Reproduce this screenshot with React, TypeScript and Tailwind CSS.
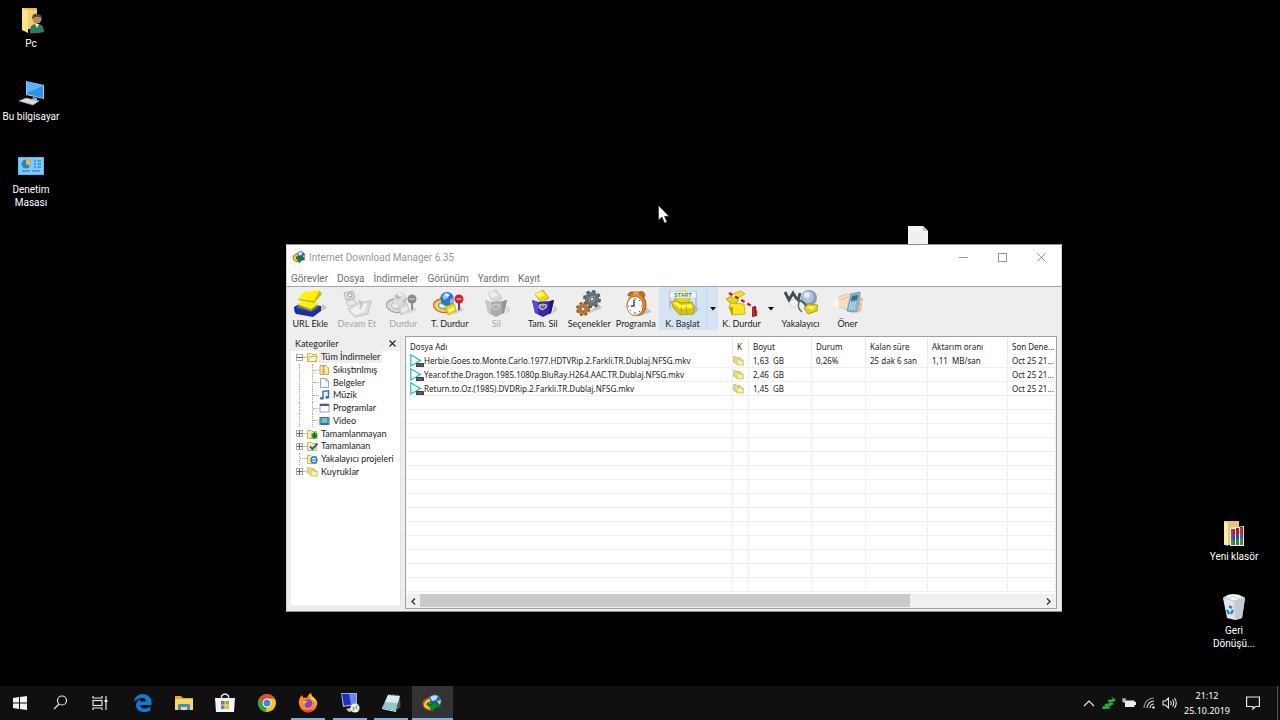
import type { ReactNode } from "react";

type IconProps = { className?: string };

/* ---------- toolbar icons, all drawn on a 34 x 28 grid ---------- */

function ToolSvg({ children, className = "" }: { children: ReactNode; className?: string }) {
  return (
    <svg viewBox="0 0 34 28" className={`h-7 w-[34px] ${className}`} aria-hidden="true">
      {children}
    </svg>
  );
}

function AddUrlIcon() {
  return (
    <ToolSvg>
      <path d="M22 24 L34 18 L30 14z" fill="#9a9a9a" opacity=".5" />
      <path d="M1 17 L8 13 L28 16 L28 21 L20 27 L3 24 Q1 22 1 17z" fill="#1c2f9e" />
      <path d="M2 18 L9 14 L27 17 L19 22z" fill="#3450cf" />
      <path d="M4 16 L12 12 L26 15 L18 21z" fill="#b3a500" />
      <path d="M4 14 L12 10 L26 13 L18 19z" fill="#ffee22" />
      <path d="M5 10 L11 3 L27 1 L29 4 L21 13z" fill="#c9b800" />
      <path d="M5 9 L11 2 L27 0 L21 11z" fill="#fff200" />
    </ToolSvg>
  );
}

function ResumeIcon() {
  return (
    <ToolSvg>
      <path d="M4 3 L13 1 L15 8 L6 10z" fill="#dedede" stroke="#b4b4b4" />
      <circle cx="10" cy="5" r="2" fill="#f8f8f8" stroke="#999" />
      <path d="M6 11 L15 10 L16 15 L8 16z" fill="#e9e9e9" stroke="#c4c4c4" />
      <path d="M8 19 L17 13 L31 11 L28 24 L15 27z" fill="#dcdcdc" stroke="#c4c4c4" />
      <path d="M10 20 L17 16 L27 13 L25 22 L15 25z" fill="#f0f0f0" />
      <path d="M19 10 L22 14 L20 19" fill="none" stroke="#c4c4c4" strokeWidth="2" />
    </ToolSvg>
  );
}

function GlobeStopIcon({ muted }: { muted?: boolean }) {
  return (
    <ToolSvg className={muted ? "opacity-60 grayscale" : ""}>
      <path d="M20 25 L31 20 L27 16z" fill="#999" opacity=".4" />
      <circle cx="14" cy="9" r="7" fill={muted ? "#cfd3d8" : "#2f74c9"} />
      <path d="M9 6 Q12 3 16 5 L15 8 L11 10z M17 10 L21 7 L20 12 L17 14z" fill={muted ? "#9a9a9a" : "#8bc4ee"} />
      <path d="M11 4 Q14 2 17 5 L14 7z" fill="#e2f3ff" />
      <path d="M8 9 Q-1 11 1 17 Q5 24 16 22" fill="none" stroke="#e8593a" strokeWidth="1.400" />
      <path d="M8 11 Q1 13 3 17 Q7 22 15 20" fill="none" stroke="#f3cf2c" strokeWidth="2" />
      <path d="M8 13 Q4 14 6 17 Q9 20 14 18" fill="none" stroke="#59bd59" strokeWidth="1.600" />
      <path d="M12 17 L21 13 L23 21 L15 25z" fill="#e8d218" stroke="#a99600" strokeWidth=".6" />
      <path d="M15 19 L21 16 L22 20 L16 23z" fill="#fff36a" />
      <path d="M26 13 L26 20" stroke="#444" strokeWidth="1.800" />
      <circle cx="26" cy="9" r="4.500" fill="#d6202c" />
      <path d="M23.500 9 H28.500" stroke="#f0a0a0" strokeWidth="1.400" />
    </ToolSvg>
  );
}

function BinIcon({ muted }: { muted?: boolean }) {
  return (
    <ToolSvg className={muted ? "opacity-60 grayscale" : ""}>
      <path d="M26 24 L32 20 L28 15z" fill="#999" opacity=".4" />
      <path d="M9 4 L17 0 L23 8 L15 13z" fill="#e9d81c" stroke="#a39600" strokeWidth=".7" />
      <path d="M9 4 L15 1 L19 5 L13 8z" fill="#fff56b" />
      <path d="M6 10 L12 12 L24 11 L28 10 L25 23 L17 27 L9 23z" fill={muted ? "#808080" : "#3a26a8"} />
      <path d="M6 10 L12 12 L12 24 L9 23z" fill={muted ? "#b0b0b0" : "#5b49cf"} />
      <path d="M24 11 L28 10 L25 23 L23 24z" fill={muted ? "#555" : "#21127a"} />
      <path d="M13 15 Q17 13 21 15 L20 18 L16 20 L13 18z" fill="#9c8f9e" stroke="#c4b8c6" strokeWidth="1" />
      <path d="M15 16 L17 18 L19 16" fill="none" stroke={muted ? "#777" : "#3b2a7e"} strokeWidth="1" />
    </ToolSvg>
  );
}

function GearsIcon() {
  return (
    <ToolSvg>
      <path d="M15 24 L30 18 L27 14z" fill="#999" opacity=".5" />
      <circle cx="20" cy="9" r="7" fill="none" stroke="#4a5462" strokeWidth="4" strokeDasharray="3 2.5" />
      <circle cx="20" cy="9" r="5" fill="none" stroke="#66727f" strokeWidth="4.500" />
      <circle cx="20" cy="9" r="2" fill="#e8e8e8" stroke="#333c48" />
      <circle cx="11" cy="19" r="5.500" fill="none" stroke="#8a4a16" strokeWidth="3" strokeDasharray="2.6 1.8" />
      <circle cx="11" cy="19" r="4" fill="none" stroke="#bd752f" strokeWidth="3.500" />
      <circle cx="11" cy="19" r="2" fill="#f0e6dc" stroke="#6b3a10" strokeWidth=".8" />
    </ToolSvg>
  );
}

function AlarmIcon() {
  return (
    <ToolSvg>
      <path d="M20 26 L33 22 L27 17z" fill="#999" opacity=".5" />
      <path d="M9 6 Q9 1 15 2 L13 6z M19 2 Q26 0 26 6 L23 8z" fill="#c8701c" stroke="#7d3d08" strokeWidth=".6" />
      <path d="M14 1 L20 1 L19 4 L15 4z" fill="#e8a050" />
      <ellipse cx="19" cy="15" rx="8.500" ry="11" fill="#a8540f" />
      <ellipse cx="17" cy="15" rx="9.500" ry="11" fill="#e08a34" />
      <ellipse cx="16" cy="16" rx="8" ry="9.500" fill="#fafcff" stroke="#8c4a10" strokeWidth=".6" />
      <path d="M15 10 V16 H12" fill="none" stroke="#2a3fa5" strokeWidth="1.400" />
      <path d="M16 8 V10 M16 22 V24 M9 16 H10 M22 16 H23 M20 11 L21 10 M20 21 L21 22 M11 21 L12 20" stroke="#444" strokeWidth=".9" />
    </ToolSvg>
  );
}

function StartQueueIcon() {
  return (
    <ToolSvg>
      <path d="M24 26 L33 20 L29 15z" fill="#8a98a5" opacity=".5" />
      <path d="M4 1 V19 M30 1 V18" stroke="#9aa5ae" strokeWidth="1" />
      <path d="M10 1 L20 0 L24 3 L12 4z" fill="#f0e030" />
      <path d="M9 8 L24 7 L23 13 L9 14z" fill="#e6d51c" stroke="#9f9100" strokeWidth=".6" />
      <path d="M5 12 L10 10 L14 13 L26 12 L28 16 L28 24 L14 25 L8 19z" fill="#d7c60f" stroke="#938700" strokeWidth=".6" />
      <path d="M7 13 L11 12 L15 15 L25 14 L27 18 L14 19z" fill="#fff04a" />
      <path d="M15 17 L16 24 M20 16 L21 24" stroke="#a89b00" strokeWidth=".8" />
      <rect x="4" y="2" width="26" height="6" fill="#f5fbf5" stroke="#c4d0ca" strokeWidth=".6" />
      <text x="17" y="7" textAnchor="middle" fontSize="5.500" fontWeight="bold" fill="#4e7e76" fontFamily="Liberation Sans, sans-serif">START</text>
    </ToolSvg>
  );
}

function StopQueueIcon() {
  return (
    <ToolSvg>
      <path d="M5 5 L16 1 L20 4 L11 9z" fill="#f3e31c" stroke="#a39600" strokeWidth=".6" />
      <path d="M1 9 L8 5 L15 9 L8 16z" fill="#e5d310" stroke="#938700" strokeWidth=".6" />
      <path d="M4 17 L6 13 L19 14 L20 24 L7 25z" fill="#f8e81f" stroke="#a39600" strokeWidth=".6" />
      <path d="M4 17 L8 17 L8 25 L7 25z" fill="#b5a700" />
      <path d="M4 3 L30 18" stroke="#f5f1f0" strokeWidth="2.400" />
      <path d="M4 3 L30 18" stroke="#c01d22" strokeWidth="2.400" strokeDasharray="4 3" />
      <path d="M28 27 L34 23 L32 19z" fill="#999" opacity=".5" />
      <path d="M27 17 L31 16 L32 26 L27 27z" fill="#9d161c" />
      <path d="M28 17 L29 26" stroke="#d9484d" />
    </ToolSvg>
  );
}

function GrabberIcon() {
  return (
    <ToolSvg>
      <circle cx="25" cy="8" r="8" fill="#8a9cc2" />
      <circle cx="24" cy="7" r="6" fill="#b3c2df" />
      <circle cx="23" cy="5" r="3" fill="#e2eaf7" />
      <path d="M1 2 L5 10 L9 3 L14 11 L16 3" fill="none" stroke="#3f4d50" strokeWidth="2.800" />
      <path d="M14 9 L20 13 L24 19" fill="none" stroke="#4b5a5c" strokeWidth="2" />
      <path d="M5 12 L11 9 L15 13 L9 18z" fill="#f3f3f3" stroke="#c9c9c9" strokeWidth=".7" />
      <path d="M16 10 Q12 18 18 22" fill="none" stroke="#5a686a" strokeWidth="1.400" />
      <path d="M20 18 L24 14 L34 15 L33 21 L24 24z" fill="#e4d21a" stroke="#8f8400" strokeWidth=".7" />
      <path d="M22 17 L32 16 L28 20z" fill="#fff04a" />
    </ToolSvg>
  );
}

function TellFriendIcon() {
  return (
    <ToolSvg>
      <path d="M4 10 Q10 5 16 4 L29 4 L30 19 L22 23 L12 18 L4 17z" fill="#f6dfc0" stroke="#d9b48a" strokeWidth=".7" />
      <path d="M3 9 L7 8 L8 18 L3 17z" fill="#fbf7f0" />
      <path d="M10 10 Q14 7 18 7" fill="none" stroke="#d7ad80" strokeWidth=".8" />
      <path d="M20 4 L29 2 L27 22 L16 21z" fill="#86b4d6" stroke="#5a8ab0" strokeWidth=".7" />
      <path d="M21 6 L27 5 L26 10 L20 11z" fill="#356f80" />
      <path d="M19 13 H26 M18 15 H25 M18 17 H25 M18 19 H24" stroke="#e6f1f8" strokeWidth="1" strokeDasharray="1.4 1" />
      <path d="M29 8 L32 8 L32 11 L28 12z M28 13 L31 13 L31 16 L27 17z M27 18 L31 18 L30 21 L26 22z" fill="#e8bc94" />
    </ToolSvg>
  );
}

/* ---------- shared logo ---------- */

function IdmLogo({ className }: IconProps) {
  return (
    <svg viewBox="0 0 20 18" className={className} aria-hidden="true">
      <circle cx="12.500" cy="7.500" r="7" fill="#2560b0" />
      <path d="M8 3 Q12 0 16 2 L14 6 L10 7z" fill="#b9dcf5" />
      <path d="M15 7 L19 6 L18 11z" fill="#e3d54a" />
      <path d="M8 4 Q0 6 1.500 11 Q3 16 10 16" fill="none" stroke="#e2452b" strokeWidth="1.600" />
      <path d="M8 6 Q2 8 3.500 12 Q6 14.500 10 14" fill="none" stroke="#f5d321" strokeWidth="2.600" />
      <path d="M8 9 Q5 10 7 12" fill="none" stroke="#46b749" strokeWidth="1.600" />
      <path d="M5 9 L9 11 L12 8 L19 13 L13 14 L11 18z" fill="#128a1e" stroke="#0a4d10" strokeWidth=".6" />
    </svg>
  );
}

/* ---------- small category icons ---------- */

function FolderIcon({ badge }: { badge?: "down" | "check" | "ie" }) {
  return (
    <svg viewBox="0 0 11 10" className="h-[10px] w-[11px] shrink-0" aria-hidden="true">
      <path d="M.5 9.500 V1.500 H4 L5 2.500 H9.500 V9.500z" fill="#f8f0a0" stroke="#b8a850" strokeWidth=".8" />
      {!badge && <path d="M.5 9.500 L3 4.500 H10.700 L8.500 9.500z" fill="#fdf9b8" stroke="#b8a850" strokeWidth=".8" />}
      {badge === "down" && <path d="M4.500 4 H10.500 V9.500 H4.500z" fill="#3fae46" />}
      {badge === "down" && <path d="M7.500 3 V8 M5.500 6 L7.500 8.500 L9.500 6" fill="none" stroke="#156b1d" strokeWidth="1.400" />}
      {badge === "check" && <path d="M3 5.500 L5.500 8 L10.500 2.500" fill="none" stroke="#2b5fae" strokeWidth="2" />}
      {badge === "ie" && <circle cx="7" cy="6" r="2.900" fill="#fff" stroke="#2186cf" strokeWidth="1.500" />}
      {badge === "ie" && <path d="M5 6 H9.500" stroke="#2186cf" strokeWidth="1.200" />}
    </svg>
  );
}

function FoldersIcon() {
  return (
    <svg viewBox="0 0 11 10" className="h-[10px] w-[11px] shrink-0" aria-hidden="true">
      <g fill="#f7f1a4" stroke="#c0b25c" strokeWidth=".7">
        <path d="M.5 6 V.5 H3 L4 1.500 H7 V6z" />
        <path d="M2 7.500 V2 H4.500 L5.500 3 H9 V7.500z" />
        <path d="M4 9 V3.500 H6.500 L7.500 4.500 H10.600 V9z" />
      </g>
    </svg>
  );
}

function SmallIcon({ kind }: { kind: string }) {
  return (
    <svg viewBox="0 0 11 10" className="h-[10px] w-[11px] shrink-0" aria-hidden="true">
      {kind === "zip" && (
        <>
          <path d="M1 .5 H7 L9.500 3 V9.500 H1z" fill="#f7e7a0" stroke="#b9974a" strokeWidth=".8" />
          <path d="M4.500 1 V6" stroke="#9a7420" strokeWidth="1.200" strokeDasharray="1 .6" />
          <rect x="3.500" y="6" width="2" height="2.500" fill="#c29a3a" />
        </>
      )}
      {kind === "doc" && <path d="M1.500 .5 H7 L9.500 3 V9.500 H1.500z M7 .5 V3 H9.500" fill="#f6f8ff" stroke="#8791b5" strokeWidth=".8" />}
      {kind === "music" && (
        <>
          <path d="M4 8 V1.500 L9.500 .8 V7" fill="none" stroke="#2b7ec4" strokeWidth="1.500" />
          <ellipse cx="2.800" cy="8.200" rx="1.900" ry="1.500" fill="#2b7ec4" />
          <ellipse cx="8.300" cy="7.200" rx="1.900" ry="1.500" fill="#2b7ec4" />
        </>
      )}
      {kind === "app" && (
        <>
          <rect x="1" y="1" width="9" height="8" fill="#fdfdff" stroke="#8a87ae" strokeWidth=".8" />
          <path d="M1 2 H10" stroke="#4b4690" strokeWidth="1.800" />
        </>
      )}
      {kind === "video" && (
        <>
          <rect x=".5" y="1" width="10" height="8" fill="#3b6f80" />
          <rect x="2.500" y="2" width="6" height="5" fill="#69c5d8" />
          <path d="M1.300 1.500 V9 M9.700 1.500 V9" stroke="#cfe4ea" strokeWidth=".7" strokeDasharray="1 1" />
        </>
      )}
    </svg>
  );
}

function PlayerIcon() {
  return (
    <svg viewBox="0 0 14 13" className="h-[13px] w-[14px] shrink-0" aria-hidden="true">
      <path d="M.8 .8 L10.500 6.500 L.8 12z" fill="#f4feff" stroke="#35b5c0" strokeWidth="1.200" />
      <rect x="6" y="9" width="8" height="4" rx=".6" fill="#3d4246" />
      <path d="M7.500 11 H12.500" stroke="#c6cbd0" strokeWidth=".8" strokeDasharray="1 .8" />
    </svg>
  );
}

/* ---------- desktop ---------- */

function DesktopIcon({ label, children }: { label: string; children: ReactNode }) {
  return (
    <button type="button" className="flex w-full flex-col items-center text-[10px] leading-[13px] text-white">
      <svg viewBox="0 0 28 28" className="mb-[2px] h-7 w-7" aria-hidden="true">
        {children}
      </svg>
      <span className="whitespace-pre-line text-center">{label}</span>
    </button>
  );
}

function Desktop() {
  return (
    <>
      <div className="absolute left-0 top-[7px] flex w-[62px] flex-col gap-[30px]">
        <DesktopIcon label="Pc">
          <path d="M5 1 H20 V22 H5z" fill="#e2bb55" />
          <path d="M5 1 L11 3 V26 L5 23z" fill="#fbe28e" />
          <path d="M11 3 H20 V22 H11z" fill="#f2d06c" />
          <path d="M13 26 Q12 18 18 17 L22 17 Q27 18 27 25 Q20 27 13 26z" fill="#2e7d5b" />
          <path d="M18 17 L20 21 L22 17z" fill="#f0f0f0" />
          <circle cx="20" cy="12" r="4.500" fill="#b98a66" />
          <path d="M15 12 Q15 6 20 7 Q25 7 25 12 L23 10 H18z" fill="#57483c" />
        </DesktopIcon>
        <DesktopIcon label="Bu bilgisayar">
          <path d="M9 1 L27 5 V19 L9 15z" fill="#8fc9f2" />
          <path d="M10 2 L26 6 V18 L10 14z" fill="#2a93e8" />
          <path d="M10 2 L26 6 L10 13z" fill="#5cb4f5" />
          <path d="M16 17 L20 18 V21 L15 20z" fill="#9aa5ad" />
          <path d="M2 21 L9 18 L22 21 L16 25z" fill="#d9dde0" stroke="#9ba3a8" strokeWidth=".7" />
        </DesktopIcon>
        <DesktopIcon label={"Denetim\nMasası"}>
          <rect x="1" y="4" width="26" height="18" fill="#58b8ee" />
          <rect x="2" y="5" width="24" height="16" fill="#7accf6" />
          <circle cx="9" cy="11" r="4.500" fill="#2f80c6" />
          <path d="M9 11 V6 A5 5 0 0 1 13 13z" fill="#f5b92e" />
          <path d="M17 8 H19 M20.500 8 H24 M17 11 H19 M20.500 11 H24 M17 14 H19 M20.500 14 H24 M5 18 H13 M15 18 H23" stroke="#3e8cc8" strokeWidth="1.300" />
        </DesktopIcon>
      </div>

      <svg viewBox="0 0 20 26" className="absolute left-[908px] top-[226px] h-[26px] w-5" aria-hidden="true">
        <path d="M0 0 H15 L20 5 V26 H0z" fill="#f3f3f3" />
        <path d="M15 0 V5 H20z" fill="#c4c4c4" />
        <path d="M3 7 H16 M3 10 H16 M3 13 H16 M3 16 H16" stroke="#e9e9e9" strokeWidth="1" />
      </svg>

      <div className="absolute bottom-9 right-[15px] flex w-[62px] flex-col gap-[31px]">
        <DesktopIcon label="Yeni klasör">
          <path d="M4 1 H19 V25 H4z" fill="#e5c775" />
          <path d="M4 1 L8 3 V26 L4 24z" fill="#fbe9b0" />
          <path d="M10 8 L24 6 V26 H10z" fill="#f5efe0" />
          <path d="M11 9 h4 v6 h-4z M16 8 h3 v6 h-3z M20 7 h3 v7 h-3z" fill="#a0202c" />
          <path d="M11 15 h4 v5 h-4z M16 14 h3 v5 h-3z M20 14 h3 v5 h-3z" fill="#3a46b4" />
          <path d="M11 20 h4 v5 h-4z M16 19 h3 v6 h-3z M20 19 h3 v6 h-3z" fill="#2c8a3c" />
          <path d="M12 9 V25 M21 8 V25" stroke="#d9a0a8" strokeWidth=".8" opacity=".6" />
        </DesktopIcon>
        <DesktopIcon label={"Geri\nDönüşü..."}>
          <path d="M3 4 L8 1 L13 0 L19 1 L25 4 L14 7z" fill="#f6f8fa" stroke="#bcc5cc" strokeWidth=".6" />
          <path d="M3 4 L14 7 L25 4 L22 24 L15 26 L7 24z" fill="#dfe5ea" />
          <path d="M14 7 L25 4 L22 24 L15 26z" fill="#c3ccd3" />
          <path d="M5 3 L10 5 L13 2 L18 5 L22 3" fill="none" stroke="#cdd5da" strokeWidth="1" />
          <path d="M9 12 L12 14 M13 16 L11 20 M9 20 L7 16" stroke="#2285d0" strokeWidth="2.400" />
        </DesktopIcon>
      </div>
    </>
  );
}

/* ---------- application window ---------- */

const menuItems = ["Görevler", "Dosya", "İndirmeler", "Görünüm", "Yardım", "Kayıt"];

const tools = [
  { label: "URL Ekle", icon: <AddUrlIcon /> },
  { label: "Devam Et", icon: <ResumeIcon />, disabled: true },
  { label: "Durdur", icon: <GlobeStopIcon muted />, disabled: true },
  { label: "T. Durdur", icon: <GlobeStopIcon /> },
  { label: "Sil", icon: <BinIcon muted />, disabled: true },
  { label: "Tam. Sil", icon: <BinIcon /> },
  { label: "Seçenekler", icon: <GearsIcon /> },
  { label: "Programla", icon: <AlarmIcon /> },
];

const categories = [
  { label: "Tüm İndirmeler", icon: <FolderIcon />, level: 0, sign: "−", selected: true },
  { label: "Sıkıştırılmış", icon: <SmallIcon kind="zip" />, level: 1 },
  { label: "Belgeler", icon: <SmallIcon kind="doc" />, level: 1 },
  { label: "Müzik", icon: <SmallIcon kind="music" />, level: 1 },
  { label: "Programlar", icon: <SmallIcon kind="app" />, level: 1 },
  { label: "Video", icon: <SmallIcon kind="video" />, level: 1 },
  { label: "Tamamlanmayan", icon: <FolderIcon badge="down" />, level: 0, sign: "+" },
  { label: "Tamamlanan", icon: <FolderIcon badge="check" />, level: 0, sign: "+" },
  { label: "Yakalayıcı projeleri", icon: <FolderIcon badge="ie" />, level: 0 },
  { label: "Kuyruklar", icon: <FoldersIcon />, level: 0, sign: "+" },
];

const columns = ["Dosya Adı", "K", "Boyut", "Durum", "Kalan süre", "Aktarım oranı", "Son Dene..."];

const downloads = [
  { name: "Herbie.Goes.to.Monte.Carlo.1977.HDTVRip.2.Farkli.TR.Dublaj.NFSG.mkv", size: "1,63  GB", status: "0,26%", left: "25 dak 6 san", rate: "1,11  MB/san", last: "Oct 25 21..." },
  { name: "Year.of.the.Dragon.1985.1080p.BluRay.H264.AAC.TR.Dublaj.NFSG.mkv", size: "2,46  GB", status: "", left: "", rate: "", last: "Oct 25 21..." },
  { name: "Return.to.Oz.(1985).DVDRip.2.Farkli.TR.Dublaj.NFSG.mkv", size: "1,45  GB", status: "", left: "", rate: "", last: "Oct 25 21..." },
];

function ToolButton({ label, icon, disabled, className = "" }: { label: string; icon: ReactNode; disabled?: boolean; className?: string }) {
  return (
    <button
      type="button"
      disabled={disabled}
      className={`flex flex-col items-center pt-[3px] leading-[12px] whitespace-nowrap ${disabled ? "text-[#a6a6a6]" : "text-[#222]"} ${className}`}
    >
      {icon}
      <span>{label}</span>
    </button>
  );
}

function DropArrow({ label, className = "" }: { label: string; className?: string }) {
  return (
    <button type="button" aria-label={label} className={`flex w-3 items-center justify-center ${className}`}>
      <svg viewBox="0 0 6 4" className="h-1 w-1.5">
        <path d="M0 0 H6 L3 3.500z" fill="#000" />
      </svg>
    </button>
  );
}

function Toolbar() {
  return (
    <div className="flex h-[50px] shrink-0 border-t border-[#a5a5a5] bg-[#eee]">
      <div className="grid w-[372px] grid-cols-8">
        {tools.map((tool) => (
          <ToolButton key={tool.label} {...tool} />
        ))}
      </div>
      <div className="flex h-[43px] bg-[#d5e4f2]">
        <ToolButton label="K. Başlat" icon={<StartQueueIcon />} className="w-[47px]" />
        <DropArrow label="K. Başlat listesi" className="border-l border-[#c0d6ea]" />
      </div>
      <div className="flex h-[43px]">
        <ToolButton label="K. Durdur" icon={<StopQueueIcon />} className="w-[47px]" />
        <DropArrow label="K. Durdur listesi" />
      </div>
      <ToolButton label="Yakalayıcı" icon={<GrabberIcon />} className="w-[47px]" />
      <ToolButton label="Öner" icon={<TellFriendIcon />} className="w-[47px]" />
    </div>
  );
}

function Categories() {
  return (
    <aside className="mb-1 flex w-[110px] flex-col border-r border-[#e0e0e0] bg-white">
      <div className="flex h-[15px] shrink-0 items-center justify-between bg-[#eee] pl-1 pr-1">
        <h2>Kategoriler</h2>
        <button type="button" aria-label="Kategorileri kapat">
          <svg viewBox="0 0 7 7" className="h-[7px] w-[7px]">
            <path d="M.5 .5 L6.500 6.500 M6.500 .5 L.5 6.500" stroke="#222" strokeWidth="1.100" />
          </svg>
        </button>
      </div>
      <ul className="grid h-[127px] shrink-0 grid-rows-10">
        {categories.map((cat) => (
          <li key={cat.label} className="flex items-center whitespace-nowrap pl-[5px]">
            {cat.level === 0 ? (
              <span className="flex h-full w-[11px] shrink-0 items-center">
                {cat.sign ? (
                  <button type="button" aria-label={cat.label} className="flex h-[7px] w-[7px] items-center justify-center border border-[#aaa] bg-white">
                    <svg viewBox="0 0 5 5" className="h-[5px] w-[5px]">
                      <path d={cat.sign === "+" ? "M0 2.500 H5 M2.500 0 V5" : "M0 2.500 H5"} stroke="#666" strokeWidth="1" />
                    </svg>
                  </button>
                ) : (
                  <span className="ml-[3px] h-full border-l border-dotted border-[#aaa]" />
                )}
                <span className="flex-1 border-t border-dotted border-[#aaa]" />
              </span>
            ) : (
              <span className="flex h-full w-[23px] shrink-0 items-center pl-[3px]">
                <span className="h-full border-l border-dotted border-[#aaa]" />
                <span className="ml-[12px] h-full border-l border-dotted border-[#aaa]" />
                <span className="flex-1 border-t border-dotted border-[#aaa]" />
              </span>
            )}
            {cat.icon}
            <button type="button" className={`ml-px px-[2px] leading-[12px] ${cat.selected ? "bg-[#eee]" : ""}`}>
              {cat.label}
            </button>
          </li>
        ))}
      </ul>
    </aside>
  );
}

function DownloadTable() {
  const cell = "border-b border-r border-[#f0f0f0] p-0 pl-1 whitespace-pre font-normal";
  return (
    <section className="ml-[4px] flex min-w-0 flex-1 flex-col border border-[#a0a0a0] bg-white font-['Noto_Sans',sans-serif] text-[8px]">
      <div className="min-h-0 flex-1 overflow-hidden pt-px">
        <table className="w-full table-fixed border-separate border-spacing-0 text-left">
          <colgroup>
            <col />
            <col className="w-4" />
            <col className="w-[63px]" />
            <col className="w-[54px]" />
            <col className="w-[62px]" />
            <col className="w-20" />
            <col className="w-12" />
          </colgroup>
          <thead>
            <tr className="h-4">
              {columns.map((col) => (
                <th key={col} scope="col" className="border-r border-[#e5e5e5] p-0 pl-1 font-normal whitespace-nowrap last:border-r-0">
                  {col}
                </th>
              ))}
            </tr>
          </thead>
          <tbody>
            {downloads.map((row) => (
              <tr key={row.name} className="h-[14px]">
                <td className={cell}>
                  <span className="flex items-center">
                    <PlayerIcon />
                    <span>{row.name}</span>
                  </span>
                </td>
                <td className="border-r border-b border-[#f0f0f0] p-0">
                  <span className="flex items-start">
                    <FoldersIcon />
                  </span>
                </td>
                <td className={cell}>{row.size}</td>
                <td className={cell}>{row.status}</td>
                <td className={cell}>{row.left}</td>
                <td className={cell}>{row.rate}</td>
                <td className={cell}>{row.last}</td>
              </tr>
            ))}
            {Array.from({ length: 14 }, (_, i) => (
              <tr key={i} className="h-[14px]">
                {columns.map((col) => (
                  <td key={col} className={cell} />
                ))}
              </tr>
            ))}
          </tbody>
        </table>
      </div>
      <div className="flex h-[14px] shrink-0 bg-[#f0f0f0]">
        <button type="button" aria-label="Sola kaydır" className="flex w-[14px] items-center justify-center">
          <svg viewBox="0 0 5 7" className="h-[7px] w-[5px]"><path d="M4 .5 L1 3.500 L4 6.500" fill="none" stroke="#333" strokeWidth="1.400" /></svg>
        </button>
        <div className="flex-1">
          <div className="h-[13px] w-[79%] bg-[#cacaca]" />
        </div>
        <button type="button" aria-label="Sağa kaydır" className="flex w-4 items-center justify-center">
          <svg viewBox="0 0 5 7" className="h-[7px] w-[5px]"><path d="M1 .5 L4 3.500 L1 6.500" fill="none" stroke="#333" strokeWidth="1.400" /></svg>
        </button>
      </div>
    </section>
  );
}

function AppWindow() {
  return (
    <div className="absolute bottom-[74px] left-[286px] right-[218px] top-[244px] flex flex-col border border-[#8f8f8f] border-x-[#d0d0d0] bg-white font-['Lato',sans-serif] text-[9px] leading-[13px] text-[#222]">
      <header className="flex h-6 shrink-0 items-center pl-[5px] font-['Roboto',sans-serif] text-[10px] text-[#999]">
        <IdmLogo className="mr-[3px] h-3 w-[14px]" />
        <h1 className="flex-1">Internet Download Manager 6.35</h1>
        <button type="button" aria-label="Simge durumuna küçült" className="flex h-full w-[39px] items-center justify-center">
          <svg viewBox="0 0 9 9" className="h-[9px] w-[9px]"><path d="M0 4.500 H9" stroke="#999" /></svg>
        </button>
        <button type="button" aria-label="Ekranı kapla" className="flex h-full w-[39px] items-center justify-center">
          <svg viewBox="0 0 9 9" className="h-[9px] w-[9px]"><rect x=".5" y=".5" width="8" height="8" fill="none" stroke="#999" /></svg>
        </button>
        <button type="button" aria-label="Kapat" className="flex h-full w-[39px] items-center justify-center">
          <svg viewBox="0 0 9 9" className="h-[9px] w-[9px]"><path d="M.5 .5 L8.500 8.500 M8.500 .5 L.5 8.500" stroke="#999" /></svg>
        </button>
      </header>
      <nav className="flex h-[17px] shrink-0 items-end gap-[9px] pl-1 pb-px font-['Roboto',sans-serif] text-[10px] text-[#6f6f6f]">
        {menuItems.map((item) => (
          <button key={item} type="button">{item}</button>
        ))}
      </nav>
      <Toolbar />
      <div className="flex min-h-0 flex-1 bg-[#eee] pb-[2px] pl-1 pr-1">
        <Categories />
        <DownloadTable />
      </div>
    </div>
  );
}

/* ---------- taskbar ---------- */

function TaskSvg({ children }: { children: ReactNode }) {
  return (
    <svg viewBox="0 0 20 20" className="h-5 w-5" aria-hidden="true">
      {children}
    </svg>
  );
}

const systemButtons = [
  {
    label: "Başlat",
    icon: <path d="M3 5 L9 4 V9.500 H3z M10 4 L17 3 V9.500 H10z M3 10.500 H9 V16 L3 15z M10 10.500 H17 V17 L10 16z" fill="#f2f2f2" />,
  },
  {
    label: "Ara",
    icon: (
      <g fill="none" stroke="#e6e6e6" strokeWidth="1.200">
        <circle cx="12" cy="7.500" r="4.500" />
        <path d="M9 11 L4 16" />
      </g>
    ),
  },
  {
    label: "Görev görünümü",
    icon: (
      <g fill="none" stroke="#e6e6e6" strokeWidth="1.200">
        <path d="M3 3 V5 H12 V3 M3 17 V15 H12 V17 M16 3 V17" />
        <rect x="3" y="7.500" width="9" height="5" />
        <path d="M14.500 8 H17.500" strokeWidth="2" />
      </g>
    ),
  },
];

const taskButtons = [
  {
    label: "Edge",
    running: false,
    icon: (
      <path d="M1 9 Q2 1 10 1 Q18 1.500 18.500 9.500 V12 H7 Q7.500 15.500 11.500 15.500 Q14.500 15.500 17.300 13.800 V17.500 Q14 19.300 10.500 19 Q3 18.500 3 12 Q3.300 8 7.500 6 Q6.800 7 6.800 8.500 H13 Q13 5 9.500 5 Q4 5 1 9z" fill="#0f7bd6" />
    ),
  },
  {
    label: "Dosya Gezgini",
    running: false,
    icon: (
      <>
        <path d="M1 3 H7 L9 5 H19 V17 H1z" fill="#e0aa35" />
        <path d="M1 6 H19 V17 H1z" fill="#fbd76b" />
        <path d="M4 17 V12 Q4 11 5 11 H15 Q16 11 16 12 V17 H13 V14 H7 V17z" fill="#3f8fd0" />
      </>
    ),
  },
  {
    label: "Store",
    running: false,
    icon: (
      <>
        <path d="M6.500 6 V3 Q10 -1 13.500 3 V6" fill="none" stroke="#e8e8e8" strokeWidth="1.300" />
        <path d="M0 5 H20 L19 19 H1z" fill="#f5f5f5" />
        <path d="M6 8 h3.600 v3.600 h-3.600z" fill="#e94f2a" />
        <path d="M10.400 8 h3.600 v3.600 h-3.600z" fill="#7db728" />
        <path d="M6 12.400 h3.600 v3.600 h-3.600z" fill="#1e9fe8" />
        <path d="M10.400 12.400 h3.600 v3.600 h-3.600z" fill="#f8b816" />
      </>
    ),
  },
  {
    label: "Chrome",
    running: false,
    icon: (
      <>
        <circle cx="10" cy="10" r="9" fill="#f5c518" />
        <path d="M2.200 5.500 A9 9 0 0 1 17.800 5.500 H10 L6.100 12.200z" fill="#e2453a" />
        <path d="M2.200 5.500 L6.100 12.200 L10 14.500 L8.500 19 A9 9 0 0 1 2.200 5.500z" fill="#2ea44f" />
        <circle cx="10" cy="10" r="4.500" fill="#fff" />
        <circle cx="10" cy="10" r="3.500" fill="#3f84e8" />
      </>
    ),
  },
  {
    label: "Firefox",
    running: true,
    icon: (
      <>
        <path d="M1 11 Q0 6 4 2 L5.500 5 Q8 4 9 5 Q10 1 13 0 Q13 3 15 4 Q20 8 19 12 Q17 19 10 19.500 Q3 19 1 11z" fill="#ff8a1d" />
        <path d="M13 0 Q13 3 15 4 Q20 8 19 12 Q18 8 14 7 Q11 4 13 0z" fill="#ffd83a" />
        <path d="M1 11 Q2 16 7 17 Q13 18 16 14 Q14 19 10 19.500 Q3 19 1 11z" fill="#ef3350" />
        <circle cx="10" cy="10.500" r="4.200" fill="#7a45d8" />
        <path d="M4 8 Q8 7 10 9 Q7 9 7 12 Q4 11 4 8z" fill="#ffb52e" />
      </>
    ),
  },
  {
    label: "Uzak Masaüstü",
    running: true,
    icon: (
      <>
        <path d="M1 0 H17 V12 L3 14z" fill="#aab2c0" />
        <path d="M2 1 H16 V11 L4 12.500z" fill="#1a2fc4" />
        <path d="M9 1 H16 V11 L11 11.500z" fill="#6c86e8" />
        <path d="M6 16 L14 14 L16 17 L9 19z" fill="#c4c9cf" />
        <circle cx="15" cy="15" r="4.600" fill="#e9efe6" />
        <path d="M12.500 14 L14.500 16 L12.500 17.500 M17.500 12.500 L15.500 14.200 L17.500 16" fill="none" stroke="#3c8f3c" strokeWidth="1" />
      </>
    ),
  },
  {
    label: "Not Defteri",
    running: true,
    icon: (
      <>
        <path d="M7 2 L19 3 L15 18 L1 15z" fill="#8fc6cf" />
        <path d="M7 2 L19 3 L17 10 L4 9z" fill="#d4eef1" />
        <path d="M15 18 L19 3 L19.500 14z" fill="#5c5044" />
        <path d="M1 15 L15 18 L15 19 L1 16z" fill="#e8f4f6" />
        <path d="M7 1.500 L18 2.500" stroke="#888" strokeWidth="1" strokeDasharray="1 1" />
      </>
    ),
  },
];

function Taskbar() {
  return (
    <footer className="relative z-10 flex h-[34px] shrink-0 items-stretch bg-[#101010] text-white">
      <div className="mr-[2px] grid w-[120px] grid-cols-3">
        {systemButtons.map((btn) => (
          <button key={btn.label} type="button" aria-label={btn.label} className="flex items-center justify-center">
            <TaskSvg>{btn.icon}</TaskSvg>
          </button>
        ))}
      </div>
      <div className="grid w-[331px] grid-cols-8">
        {taskButtons.map((btn) => (
          <button key={btn.label} type="button" aria-label={btn.label} className="flex flex-col items-center">
            <span className="flex flex-1 items-center">
              <TaskSvg>{btn.icon}</TaskSvg>
            </span>
            <span className={`-mt-[2px] h-[2px] w-[34px] ${btn.running ? "bg-[#76b0e4]" : ""}`} />
          </button>
        ))}
        <button type="button" aria-label="Internet Download Manager" className="flex flex-col items-center bg-[#333]">
          <span className="flex flex-1 items-center">
            <IdmLogo className="h-[18px] w-5" />
          </span>
          <span className="-mt-[2px] h-[2px] w-full bg-[#76b0e4]" />
        </button>
      </div>

      <div className="ml-auto flex items-center">
        <button type="button" aria-label="Gizli simgeleri göster" className="flex w-5 justify-center">
          <svg viewBox="0 0 12 7" className="h-[7px] w-3"><path d="M1 6 L6 1 L11 6" fill="none" stroke="#e6e6e6" strokeWidth="1.200" /></svg>
        </button>
        <button type="button" aria-label="Bağlantı durumu" className="flex w-5 justify-center">
          <svg viewBox="0 0 14 14" className="h-[14px] w-[14px]">
            <path d="M6 4 L11 3 L9 0 L14 4 L11 6 L6 6z M3 8 L8 7 L7 5 L12 8 L8 10 L3 10z M0 13 L1 10 L5 10 L4 8.500 L9 12 L5 13z" fill="#1fae3d" />
          </svg>
        </button>
        <button type="button" aria-label="Pil" className="flex w-5 justify-center">
          <svg viewBox="0 0 14 10" className="h-[10px] w-[14px]">
            <path d="M3 2.500 H12.500 V4 H14 V7 H12.500 V9 H3z" fill="#ededed" />
            <path d="M0 1 H4 M2 1 V5 M0 3 H4" stroke="#ededed" strokeWidth="1" />
          </svg>
        </button>
        <button type="button" aria-label="Ağ" className="flex w-5 justify-center">
          <svg viewBox="0 0 12 12" className="h-3 w-3">
            <g fill="none" strokeWidth="1.200">
              <path d="M1 11 A10 10 0 0 1 11 1" stroke="#8a8a8a" />
              <path d="M4 11 A7 7 0 0 1 11 4" stroke="#e0e0e0" />
              <path d="M7 11 A4 4 0 0 1 11 7" stroke="#e0e0e0" />
            </g>
            <circle cx="10.500" cy="10.500" r="1.200" fill="#e6e6e6" />
          </svg>
        </button>
        <button type="button" aria-label="Ses" className="flex w-5 justify-center">
          <svg viewBox="0 0 15 12" className="h-3 w-[15px]">
            <g fill="none" stroke="#e6e6e6" strokeWidth="1.100">
              <path d="M1 4 H3.500 L6.500 1 V11 L3.500 8 H1z" />
              <path d="M8.500 4 Q10 6 8.500 8 M10.500 2.500 Q13 6 10.500 9.500 M12.500 1 Q16 6 12.500 11" />
            </g>
          </svg>
        </button>
        <button type="button" className="flex w-[56px] flex-col items-center font-['Noto_Sans',sans-serif] text-[9px] leading-[15px]">
          <time>21:12</time>
          <time>25.10.2019</time>
        </button>
        <button type="button" aria-label="Bildirimler" className="flex w-9 justify-center">
          <svg viewBox="0 0 14 14" className="h-[14px] w-[14px]">
            <path d="M.6 1 H13.400 V10.500 H9.500 L7 13 V10.500 H.6z" fill="none" stroke="#e6e6e6" strokeWidth="1.200" />
          </svg>
        </button>
        <button type="button" aria-label="Masaüstünü göster" className="ml-[6px] h-full w-[3px] border-l border-[#555]" />
      </div>
    </footer>
  );
}

export default function App() {
  return (
    <div className="flex h-screen flex-col overflow-hidden bg-black font-['Roboto',sans-serif]">
      <main className="relative min-h-0 flex-1">
        <Desktop />
        <AppWindow />
        <svg viewBox="0 0 12 19" className="absolute left-[658px] top-[205px] h-[19px] w-3" aria-hidden="true">
          <path d="M.5 .5 V15 L4 12 L6.500 18 L9 17 L6.500 11.300 H11z" fill="#fff" stroke="#222" strokeWidth=".6" />
        </svg>
      </main>
      <Taskbar />
    </div>
  );
}
